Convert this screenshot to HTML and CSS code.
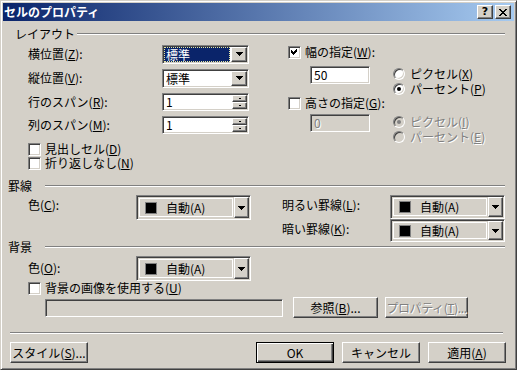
FILE: index.html
```html
<!DOCTYPE html>
<html lang="ja">
<head>
    <meta charset="UTF-8">
    <title>セルのプロパティ</title>
    <link rel="stylesheet" href="styles.css">
</head>
<body>
<div class="window">
    <div class="titlebar">
        <span class="title">セルのプロパティ</span>
        <span class="capbtn raised">?</span>
        <span class="capbtn raised">
            <svg width="8" height="7" viewBox="0 0 8 7" shape-rendering="crispEdges"><path d="M0 0h2v1h1v1h2v-1h1v-1h2v1h-1v1h-1v1h-1v1h1v1h1v1h1v1h-2v-1h-1v-1h-2v1h-1v1h-2v-1h1v-1h1v-1h1v-1h-1v-1h-1v-1h-1z"/></svg>
        </span>
    </div>

    <div class="client">
        <!-- レイアウト -->
        <div class="ghead g-layout"><span>レイアウト</span><i class="etch"></i></div>
        <div class="layout-body">
            <div class="lcol">
                <div class="frow">
                    <span class="lbl">横位置(<u>Z</u>):</span>
                    <div class="combo sunken">
                        <span class="val hl">標準</span>
                        <span class="drop raised"><svg width="7" height="4" viewBox="0 0 7 4" shape-rendering="crispEdges"><path d="M0 0h7v1h-1v1h-1v1h-1v1h-1v-1h-1v-1h-1v-1h-1z"/></svg></span>
                    </div>
                </div>
                <div class="frow">
                    <span class="lbl">縦位置(<u>V</u>):</span>
                    <div class="combo sunken">
                        <span class="val">標準</span>
                        <span class="drop raised"><svg width="7" height="4" viewBox="0 0 7 4" shape-rendering="crispEdges"><path d="M0 0h7v1h-1v1h-1v1h-1v1h-1v-1h-1v-1h-1v-1h-1z"/></svg></span>
                    </div>
                </div>
                <div class="frow short">
                    <span class="lbl">行のスパン(<u>R</u>):</span>
                    <div class="spin sunken">
                        <span class="txt">1</span>
                        <span class="ud"><span class="raised"><i class="tick"></i></span><span class="raised"><i class="tick"></i></span></span>
                    </div>
                </div>
                <div class="frow">
                    <span class="lbl">列のスパン(<u>M</u>):</span>
                    <div class="spin sunken">
                        <span class="txt">1</span>
                        <span class="ud"><span class="raised"><i class="tick"></i></span><span class="raised"><i class="tick"></i></span></span>
                    </div>
                </div>
                <div class="lchecks">
                    <div class="ck"><span class="box sunken"></span>見出しセル(<u>D</u>)</div>
                    <div class="ck"><span class="box sunken"></span>折り返しなし(<u>N</u>)</div>
                </div>
            </div>

            <div class="rcol">
                <div class="ck r-w">
                    <span class="box sunken"><svg width="7" height="7" viewBox="0 0 7 7" shape-rendering="crispEdges"><path d="M6 0v3h-1v1h-1v1h-1v1h-1v-1h-1v-1h-1v-3h1v1h1v1h1v-1h1v-1h1v-1z"/></svg></span>
                    幅の指定(<u>W</u>):
                </div>
                <div class="sizeblk">
                    <div class="edit sunken">50</div>
                    <div class="radios">
                        <div class="rd"><span class="dot"></span>ピクセル(<u>X</u>)</div>
                        <div class="rd"><span class="dot on"></span>パーセント(<u>P</u>)</div>
                    </div>
                </div>
                <div class="ck">
                    <span class="box sunken"></span>高さの指定(<u>G</u>):
                </div>
                <div class="sizeblk second">
                    <div class="edit sunken off"><span class="dis">0</span></div>
                    <div class="radios dis">
                        <div class="rd"><span class="dot on off"></span>ピクセル(<u>I</u>)</div>
                        <div class="rd"><span class="dot off"></span>パーセント(<u>E</u>)</div>
                    </div>
                </div>
            </div>
        </div>

        <!-- 罫線 -->
        <div class="ghead g-border"><span>罫線</span><i class="etch"></i></div>
        <div class="bd-body">
            <div class="bcol-l">
                <span class="lbl2">色(<u>C</u>):</span>
                <div class="ccombo sunken">
                    <span class="cv"><i class="sw"></i>自動(A)</span>
                    <span class="drop raised"><svg width="7" height="4" viewBox="0 0 7 4" shape-rendering="crispEdges"><path d="M0 0h7v1h-1v1h-1v1h-1v1h-1v-1h-1v-1h-1v-1h-1z"/></svg></span>
                </div>
            </div>
            <div class="bcol-r">
                <div class="crow">
                    <span class="lbl2">明るい罫線(<u>L</u>):</span>
                    <div class="ccombo sunken">
                        <span class="cv"><i class="sw"></i>自動(A)</span>
                        <span class="drop raised"><svg width="7" height="4" viewBox="0 0 7 4" shape-rendering="crispEdges"><path d="M0 0h7v1h-1v1h-1v1h-1v1h-1v-1h-1v-1h-1v-1h-1z"/></svg></span>
                    </div>
                </div>
                <div class="crow low">
                    <span class="lbl2">暗い罫線(<u>K</u>):</span>
                    <div class="ccombo sunken">
                        <span class="cv"><i class="sw"></i>自動(A)</span>
                        <span class="drop raised"><svg width="7" height="4" viewBox="0 0 7 4" shape-rendering="crispEdges"><path d="M0 0h7v1h-1v1h-1v1h-1v1h-1v-1h-1v-1h-1v-1h-1z"/></svg></span>
                    </div>
                </div>
            </div>
        </div>

        <!-- 背景 -->
        <div class="ghead g-back"><span>背景</span><i class="etch"></i></div>
        <div class="bg-row">
            <span class="lbl2 mid">色(<u>O</u>):</span>
            <div class="ccombo sunken">
                <span class="cv"><i class="sw"></i>自動(A)</span>
                <span class="drop raised"><svg width="7" height="4" viewBox="0 0 7 4" shape-rendering="crispEdges"><path d="M0 0h7v1h-1v1h-1v1h-1v1h-1v-1h-1v-1h-1v-1h-1z"/></svg></span>
            </div>
        </div>
        <div class="ck bg-ck"><span class="box sunken"></span>背景の画像を使用する(<u>U</u>)</div>
        <div class="file-row">
            <div class="path sunken"></div>
            <span class="btn raised browse">参照(<u>B</u>)...</span>
            <span class="btn raised props"><span class="dis">プロパティ(<u>T</u>)...</span></span>
        </div>

        <div class="sep"></div>
        <div class="btns">
            <span class="btn raised">スタイル(<u>S</u>)...</span>
            <span class="grow"></span>
            <span class="btn raised default">OK</span>
            <span class="btn raised">キャンセル</span>
            <span class="btn raised">適用(<u>A</u>)</span>
        </div>
    </div>
</div>
</body>
</html>
```

FILE: styles.css
```css
* { box-sizing: border-box; }
body { margin: 0; background: #d4d0c8; font-family: "Noto Sans CJK JP", sans-serif; font-size: 12px; line-height: 14px; color: #000; }
u { text-decoration: underline; text-underline-offset: 1px; }

.window { width: 517px; height: 370px; border: 1px solid; border-color: #d4d0c8 #404040 #404040 #d4d0c8; box-shadow: inset 1px 1px #fff, inset -1px -1px #808080; padding: 2px; }
.titlebar { height: 18px; display: flex; align-items: center; padding: 0 3px 0 1px; background: linear-gradient(90deg, #0a246a, #a6caf0); }
.title { flex: 1; color: #fff; font-weight: bold; }
.capbtn { width: 16px; height: 14px; margin-left: 2px; display: flex; align-items: center; justify-content: center; font: bold 11px/12px "DejaVu Sans", sans-serif; }

.raised { background: #d4d0c8; border: 1px solid; border-color: #fff #404040 #404040 #fff; box-shadow: inset -1px -1px #808080; }
.sunken { border: 1px solid; border-color: #808080 #fff #fff #808080; box-shadow: inset 1px 1px #404040, inset -1px -1px #d4d0c8; }

.ghead { display: flex; align-items: center; height: 12px; line-height: 12px; }
.etch { flex: 1; height: 2px; border-top: 1px solid #808080; border-bottom: 1px solid #fff; }
.g-layout { margin: 7px 9px 0 12px; }
.g-layout .etch { margin-left: 2px; }
.g-border { margin: 10px 9px 0 5px; }
.g-back { margin: -1px 9px 0 5px; }
.g-border .etch, .g-back .etch { margin-left: 13px; }

.layout-body { display: flex; margin-top: 2px; }
.lcol { width: 285px; padding-left: 25px; }
.frow { display: flex; align-items: center; height: 24px; }
.frow.short { height: 23px; }
.lbl { width: 134px; }

.combo { width: 87px; height: 19px; display: flex; background: #fff; padding: 1px; }
.combo .val { flex: 1; padding-left: 2px; line-height: 15px; }
.combo .val.hl { background: #0a246a; color: #fff; outline: 1px dotted #e8e8a0; outline-offset: -1px; margin-right: 1px; }
.drop { width: 16px; display: flex; align-items: center; justify-content: center; }

.spin { width: 87px; height: 18px; display: flex; background: #fff; padding: 1px; }
.spin .txt { flex: 1; padding-left: 2px; line-height: 14px; }
.spin .ud { width: 15px; display: flex; flex-direction: column; }
.spin .ud span { flex: 1; display: flex; align-items: center; justify-content: center; }
.tick { width: 2px; height: 1px; background: #000; }

.lchecks { margin-top: 5px; }
.ck { display: flex; align-items: center; height: 14px; line-height: 12px; }
.box { width: 13px; height: 13px; background: #fff; margin-right: 4px; display: flex; align-items: center; justify-content: center; }

.rcol { flex: 1; }
.r-w { margin-top: 3px; }
.sizeblk { display: flex; margin-top: 7px; }
.sizeblk.second { margin-top: 4px; }
.edit { width: 60px; height: 18px; margin-left: 22px; background: #fff; padding: 1px 3px; line-height: 14px; }
.edit.off { background: #d4d0c8; }
.radios { margin-left: 23px; }
.rd { display: flex; align-items: center; height: 15px; line-height: 12px; }
.dot { width: 12px; height: 12px; margin-right: 5px; border-radius: 50%; border: 1px solid; border-color: #808080 #fff #fff #808080; box-shadow: inset 1px 1px #404040, inset -1px -1px #d4d0c8; background: #fff; display: flex; align-items: center; justify-content: center; }
.dot.on::after { content: ""; width: 4px; height: 4px; border-radius: 50%; background: #000; }
.dot.off { background: #d4d0c8; }
.dot.off::after { background: #808080; }
.dis { color: #808080; text-shadow: 1px 1px #fff; }

.bd-body { display: flex; margin-top: 3px; }
.bcol-l { width: 279px; padding-left: 25px; display: flex; align-items: flex-start; }
.bcol-r { display: flex; flex-direction: column; }
.crow { display: flex; height: 24px; }
.crow.low { height: 23px; }
.lbl2 { width: 108px; padding-top: 3px; }
.lbl2.mid { padding-top: 5px; }
.ccombo { width: 115px; height: 25px; display: flex; background: #d4d0c8; padding: 1px; }
.crow .ccombo { height: 100%; }
.ccombo .cv { flex: 1; margin: 1px; border: 1px solid #fff; display: flex; align-items: center; padding-left: 5px; }
.ccombo .drop { width: 15px; }
.sw { width: 12px; height: 12px; background: #000; border: 1px solid #808080; margin-right: 9px; }

.bg-row { display: flex; padding-left: 25px; margin-top: 3px; }
.bg-ck { padding-left: 25px; }
.file-row { display: flex; align-items: center; height: 21px; margin-top: 2px; }
.path { width: 238px; height: 18px; margin-left: 42px; background: #d4d0c8; }
.btn { height: 21px; display: flex; align-items: center; justify-content: center; line-height: 14px; white-space: nowrap; }
.browse { width: 85px; margin-left: 10px; }
.props { width: 83px; margin-left: 7px; letter-spacing: -0.4px; }

.sep { height: 2px; margin: 14px 11px 0 7px; border-top: 1px solid #808080; border-bottom: 1px solid #fff; }
.btns { display: flex; margin-top: 8px; padding: 0 8px 0 7px; }
.btns .btn { width: 78px; margin-left: 8px; }
.btns .btn:first-child { margin-left: 0; }
.grow { flex: 1; }
.btn.default { border-color: #000; box-shadow: inset 1px 1px #fff, inset -1px -1px #404040, inset -2px -2px #808080; }
```
